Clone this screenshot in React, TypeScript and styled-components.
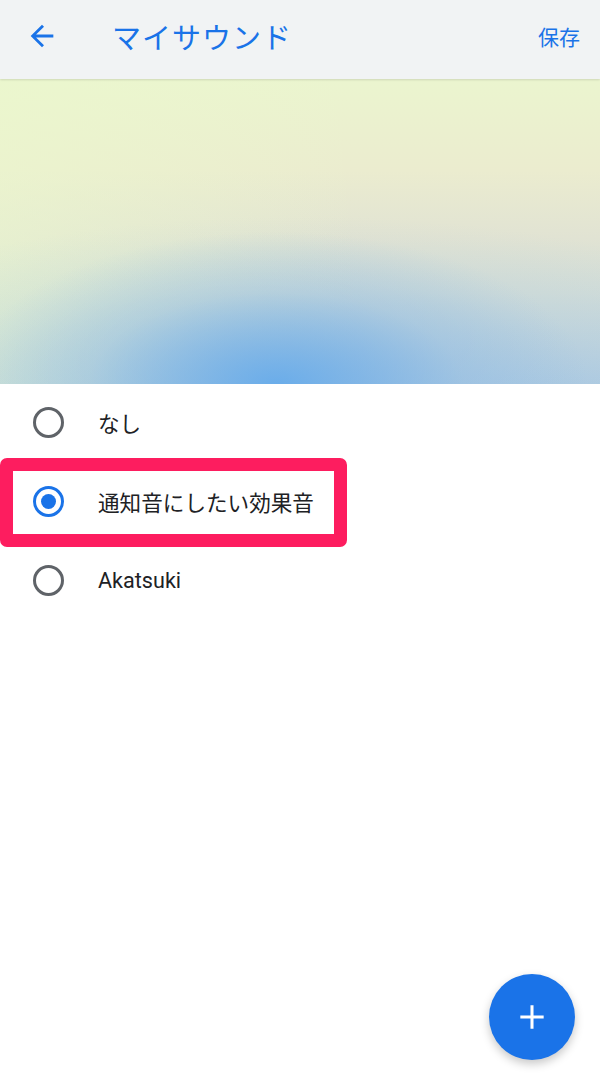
import React, { useState } from 'react';
import styled, { createGlobalStyle } from 'styled-components';

const GlobalStyle = createGlobalStyle`
  html, body {
    margin: 0;
    padding: 0;
    background: #ffffff;
    font-family: Roboto, "Noto Sans CJK JP", sans-serif;
  }
`;

const Page = styled.div`
  position: relative;
  width: 600px;
  height: 1084px;
  overflow: hidden;
  background: #ffffff;
`;

const TopBar = styled.header`
  display: flex;
  align-items: center;
  height: 79px;
  padding: 0 20px 7px 24px;
  box-sizing: border-box;
  background: #f1f3f4;
  box-shadow: 0 1px 2px rgba(0, 0, 0, 0.12);
  position: relative;
  z-index: 1;
`;

const BackButton = styled.button`
  display: flex;
  align-items: center;
  justify-content: center;
  width: 36px;
  height: 36px;
  padding: 0;
  border: none;
  background: none;
  cursor: pointer;
`;

const Title = styled.h1`
  flex: 1;
  margin: 0 0 0 52px;
  color: #1a73e8;
  font-size: 29px;
  font-weight: 400;
  letter-spacing: 1px;
  font-family: "Noto Sans CJK JP", sans-serif;
`;

const SaveButton = styled.button`
  border: none;
  background: none;
  padding: 0;
  color: #1a73e8;
  font-size: 21px;
  font-family: "Noto Sans CJK JP", sans-serif;
  cursor: pointer;
`;

// soft sky gradient banner, blue glow at the bottom middle
const Hero = styled.div`
  height: 305px;
  background:
    radial-gradient(ellipse 52% 50% at 46% 100%, rgba(100, 170, 235, 0.9) 0%, rgba(112, 174, 232, 0.7) 25%, rgba(140, 186, 228, 0.35) 60%, rgba(170, 200, 222, 0) 100%),
    radial-gradient(ellipse 90% 55% at 50% 100%, rgba(150, 190, 225, 0.55) 0%, rgba(170, 200, 222, 0.2) 60%, rgba(180, 205, 220, 0) 100%),
    linear-gradient(90deg, rgba(235, 248, 205, 0.6) 0%, rgba(236, 232, 205, 0) 60%),
    linear-gradient(180deg, #ebf5cf 0%, #ebeccf 30%, #e1e3d3 52%, #d2ddd8 70%, #bed3de 88%, #b0cce2 100%);
`;

const List = styled.div`
  position: relative;
  display: flex;
  flex-direction: column;
`;

const Row = styled.label`
  display: flex;
  align-items: center;
  height: 79px;
  padding: 0 0 3px 33px;
  box-sizing: border-box;
  cursor: pointer;
`;

const Radio = styled.span<{ checked?: boolean }>`
  box-sizing: border-box;
  display: flex;
  align-items: center;
  justify-content: center;
  width: 31px;
  height: 31px;
  border-radius: 50%;
  border: 3px solid ${p => (p.checked ? '#1a73e8' : '#5f6368')};

  &::after {
    content: '';
    display: ${p => (p.checked ? 'block' : 'none')};
    width: 15px;
    height: 15px;
    border-radius: 50%;
    background: #1a73e8;
  }
`;

const RowText = styled.span`
  margin-left: 34px;
  color: #202124;
  font-size: 21.6px;
  font-family: Roboto, "Noto Sans CJK JP", sans-serif;
`;

// annotation frame over the selected row
const Highlight = styled.div`
  position: absolute;
  left: 0;
  top: 74px;
  width: 347px;
  height: 89px;
  box-sizing: border-box;
  border: 13px solid #fd1d5f;
  border-radius: 7px;
  pointer-events: none;
`;

const Fab = styled.button`
  position: absolute;
  right: 25px;
  bottom: 24px;
  width: 86px;
  height: 86px;
  border-radius: 50%;
  border: none;
  background: #1a73e8;
  box-shadow: 0 4px 10px rgba(0, 0, 0, 0.22);
  display: flex;
  align-items: center;
  justify-content: center;
  cursor: pointer;
`;

const sounds = ['なし', '通知音にしたい効果音', 'Akatsuki'];

export default function App() {
  const [selected, setSelected] = useState(1);

  return (
    <Page>
      <GlobalStyle />
      <TopBar>
        <BackButton aria-label="戻る">
          <svg width="34" height="34" viewBox="0 0 24 24">
            <path d="M20 11H7.83l5.59-5.59L12 4l-8 8 8 8 1.41-1.41L7.83 13H20v-2z" fill="#1a73e8" />
          </svg>
        </BackButton>
        <Title>マイサウンド</Title>
        <SaveButton>保存</SaveButton>
      </TopBar>
      <Hero />
      <List>
        {sounds.map((name, i) => (
          <Row key={name} onClick={() => setSelected(i)}>
            <Radio checked={selected === i} />
            <RowText>{name}</RowText>
          </Row>
        ))}
        <Highlight />
      </List>
      <Fab aria-label="追加">
        <svg width="28" height="28" viewBox="0 0 24 24">
          <path d="M12 2v20M2 12h20" stroke="#ffffff" strokeWidth="2.6" />
        </svg>
      </Fab>
    </Page>
  );
}
